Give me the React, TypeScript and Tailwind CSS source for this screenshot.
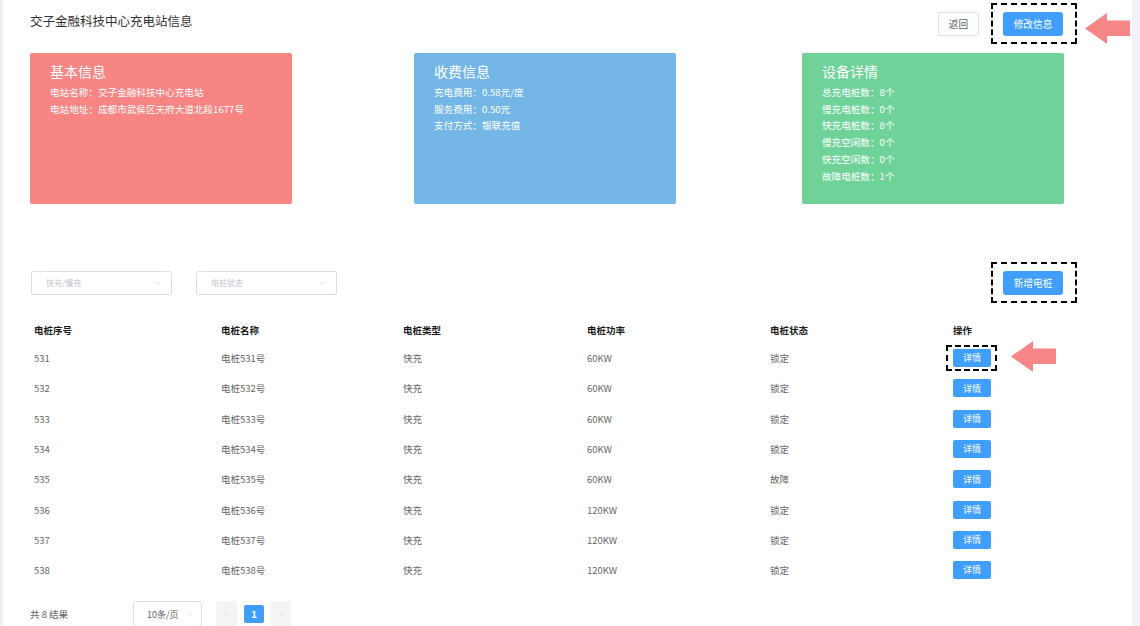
import { ChevronDown, ChevronLeft, ChevronRight } from "lucide-react";

type Pile = {
  id: number;
  type: string;
  power: string;
  status: string;
};

const piles: Pile[] = [
  { id: 531, type: "快充", power: "60KW", status: "锁定" },
  { id: 532, type: "快充", power: "60KW", status: "锁定" },
  { id: 533, type: "快充", power: "60KW", status: "锁定" },
  { id: 534, type: "快充", power: "60KW", status: "锁定" },
  { id: 535, type: "快充", power: "60KW", status: "故障" },
  { id: 536, type: "快充", power: "120KW", status: "锁定" },
  { id: 537, type: "快充", power: "120KW", status: "锁定" },
  { id: 538, type: "快充", power: "120KW", status: "锁定" },
];

const cards = [
  {
    title: "基本信息",
    color: "bg-[#f78584]",
    lines: ["电站名称：交子金融科技中心充电站", "电站地址：成都市武侯区天府大道北段1677号"],
  },
  {
    title: "收费信息",
    color: "bg-[#74b7e7]",
    lines: ["充电费用：0.58元/度", "服务费用：0.50元", "支付方式：银联充值"],
  },
  {
    title: "设备详情",
    color: "bg-[#6fd399]",
    lines: [
      "总充电桩数：8个",
      "慢充电桩数：0个",
      "快充电桩数：8个",
      "慢充空闲数：0个",
      "快充空闲数：0个",
      "故障电桩数：1个",
    ],
  },
];

function Arrow({ className }: { className: string }) {
  return (
    <svg className={className} width="45" height="31" viewBox="0 0 45 31">
      <polygon points="0,15.5 22,0 22,7.5 45,7.5 45,23 22,23 22,31" fill="#f78787" />
    </svg>
  );
}

function Dashed() {
  return (
    <span className="pointer-events-none absolute -left-[12px] -right-[14px] -top-[9px] -bottom-[8px] border-2 border-dashed border-black" />
  );
}

function Select({ placeholder }: { placeholder: string }) {
  return (
    <div className="flex h-[24px] w-[141px] items-center justify-between rounded-[2px] border border-[#dcdfe6] bg-white pl-[14px] pr-[8px]">
      <span className="text-[8px] leading-none text-[#c0c4cc]">{placeholder}</span>
      <ChevronDown size={11} strokeWidth={1.2} className="text-[#c0c4cc]" />
    </div>
  );
}

export default function App() {
  const cols = "grid grid-cols-[187px_182px_184px_183px_183px_1fr] pl-[31px]";
  return (
    <div className="flex h-[626px] w-[1140px] overflow-hidden bg-white font-['Noto_Sans_CJK_SC',sans-serif]">
      <div className="w-[3px] bg-[#eef0f5]" />
      <div className="relative flex-1">
        <div className="flex w-[1060px] items-start justify-between pl-[27px] pt-[12px]">
          <h1 className="pt-[1px] text-[12.5px] leading-[16px] text-[#333]">交子金融科技中心充电站信息</h1>
          <div className="flex gap-[24px]">
            <button className="h-[24px] w-[41px] rounded-[3px] border border-[#dcdfe6] bg-white text-[9.7px] text-[#606266]">
              返回
            </button>
            <button className="relative h-[24px] w-[60px] rounded-[3px] bg-[#409eff] text-[9.7px] text-white">
              修改信息
              <Dashed />
            </button>
          </div>
        </div>
        <Arrow className="absolute left-[1082px] top-[13px]" />

        <div className="mt-[17px] grid grid-cols-[384px_388px_262px] pl-[27px]">
          {cards.map((c) => (
            <div key={c.title} className={`h-[151px] w-[262px] rounded-[2px] ${c.color} pl-[20px] pt-[8px] text-white`}>
              <div className="text-[14px] leading-[20px]">{c.title}</div>
              <div className="mt-[3px] text-[9.6px] leading-[16.7px]">
                {c.lines.map((l) => (
                  <div key={l}>{l}</div>
                ))}
              </div>
            </div>
          ))}
        </div>

        <div className="mt-[67px] flex w-[1060px] items-start justify-between pl-[28px]">
          <div className="flex gap-[24px]">
            <Select placeholder="快充/慢充" />
            <Select placeholder="电桩状态" />
          </div>
          <button className="relative h-[24px] w-[60px] rounded-[3px] bg-[#409eff] text-[9.7px] text-white">
            新增电桩
            <Dashed />
          </button>
        </div>

        <div className="mt-[22px]">
          <div className={`${cols} h-[26px] items-center text-[9.5px] font-bold text-[#1a1a1a]`}>
            <div>电桩序号</div>
            <div>电桩名称</div>
            <div>电桩类型</div>
            <div>电桩功率</div>
            <div>电桩状态</div>
            <div>操作</div>
          </div>
          {piles.map((p, i) => (
            <div key={p.id} className={`${cols} h-[30.3px] items-center text-[9.5px] text-[#666]`}>
              <div>{p.id}</div>
              <div>电桩{p.id}号</div>
              <div>{p.type}</div>
              <div>{p.power}</div>
              <div>{p.status}</div>
              <div>
                <button className="relative h-[18px] w-[38px] rounded-[2px] bg-[#409eff] text-[9px] text-white">
                  详情
                  {i === 0 ? (
                    <span className="pointer-events-none absolute -left-[7px] -right-[6px] -top-[4px] -bottom-[4px] border-2 border-dashed border-black" />
                  ) : null}
                </button>
              </div>
            </div>
          ))}
        </div>
        <Arrow className="absolute left-[1008px] top-[341px]" />

        <div className="mt-[16px] flex items-center pl-[27px] text-[9.5px] text-[#606266]">
          <span className="w-[103px]">共 8 结果</span>
          <div className="flex h-[26px] w-[69px] items-center justify-between rounded-[3px] border border-[#dcdfe6] pl-[13px] pr-[6px]">
            <span className="text-[9px] text-[#606266]">10条/页</span>
            <ChevronDown size={10} strokeWidth={1.2} className="text-[#c0c4cc]" />
          </div>
          <div className="ml-[14px] flex items-center gap-[7px]">
            <div className="flex h-[26px] w-[21px] items-center justify-center rounded-[2px] bg-[#f4f4f5]">
              <ChevronLeft size={9} strokeWidth={1.2} className="text-[#c0c4cc]" />
            </div>
            <div className="flex h-[18px] w-[20px] items-center justify-center rounded-[2px] bg-[#409eff] text-[9.5px] font-bold text-white">
              1
            </div>
            <div className="flex h-[26px] w-[20px] items-center justify-center rounded-[2px] bg-[#f4f4f5]">
              <ChevronRight size={9} strokeWidth={1.2} className="text-[#c0c4cc]" />
            </div>
          </div>
        </div>
      </div>
      <div className="w-[8px] bg-[#f3f3f7]" />
    </div>
  );
}
